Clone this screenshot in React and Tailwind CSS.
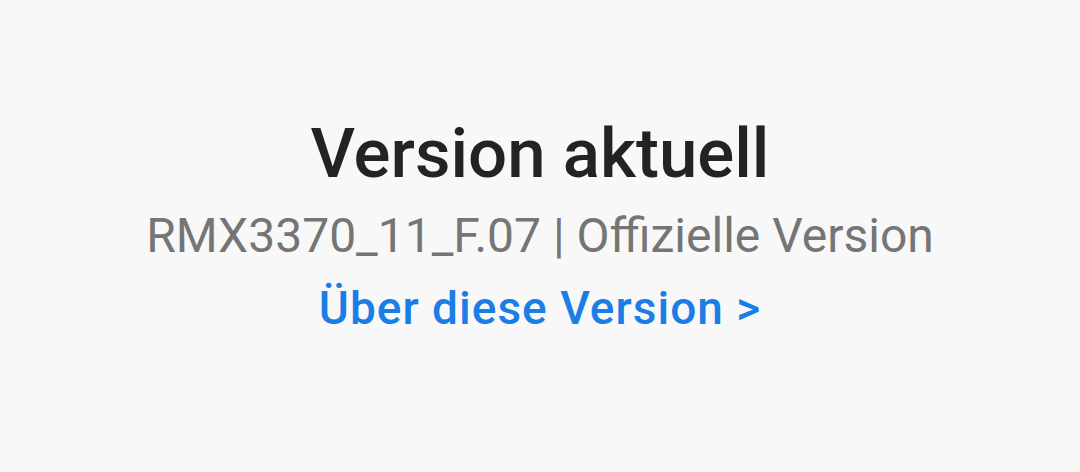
export default function App() {
  return (
    <div className="w-[1080px] h-[472px] bg-[#f8f8f8] flex flex-col items-center pt-[114px]" style={{ fontFamily: "Roboto, sans-serif" }}>
      <div className="text-[69px] leading-[80px] font-medium text-[#232323]">Version aktuell</div>
      <div className="mt-[12px] text-[48px] leading-[60px] text-[#757575]">RMX3370_11_F.07 | Offizielle Version</div>
      <div className="mt-[14px] text-[46px] leading-[56px] font-medium tracking-[1px] text-[#1a7ee6]">Über diese Version &gt;</div>
    </div>
  );
}
